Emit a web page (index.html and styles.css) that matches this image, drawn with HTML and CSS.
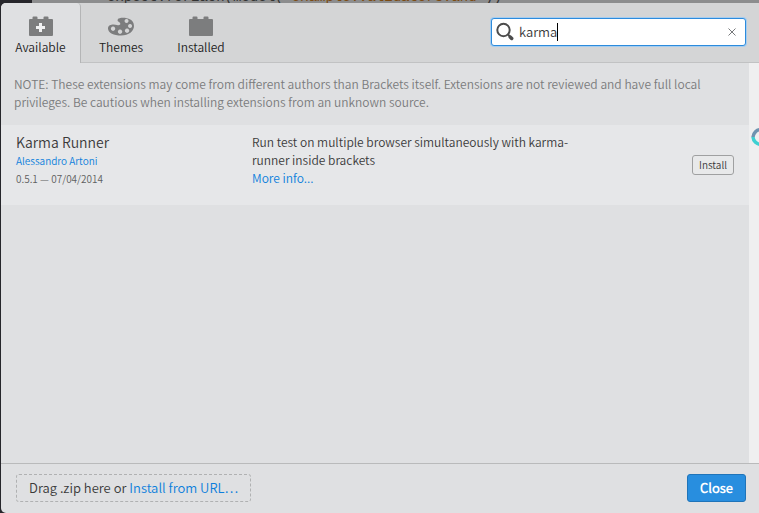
FILE: index.html
```html
<!DOCTYPE html>
<html lang="en">
<head>
<meta charset="utf-8">
<title>Extension Manager</title>
<link rel="stylesheet" href="styles.css">
</head>
<body>
<div class="editor" aria-hidden="true"><span class="gutter"></span><code class="code">expect.forEach(model(<b>'example.validators.and'</b>))</code></div>
<main class="dialog">
  <header class="header">
    <nav class="tabs">
      <button class="tab active" type="button">
        <svg class="icon" width="28" height="24" viewBox="0 0 28 24"><path fill="#7c7d7e" d="M3 5h2.500V3.500q0-1 1-1h3q1 0 1 1V5h6V3.500q0-1 1-1h3q1 0 1 1V5h3.500q1 0 1 1v15q0 1-1 1H3q-1 0-1-1V6q0-1 1-1z"/><path stroke="#f0f1f2" stroke-width="3" d="M13.500 9v9M9 13.500h9"/></svg>
        <span>Available</span>
      </button>
      <button class="tab" type="button">
        <svg class="icon" width="28" height="24" viewBox="0 0 28 24"><path fill="#7c7d7e" fill-rule="evenodd" d="M11 5C12 3 27 2 27 12C27 17 22 21.500 14 21.500C7 21.500 1 19 1 14.500C1 10 7 10 10 11C14 12 14 9 12 8C10 7 10.500 6 11 5zM19.500 5a2 2 0 1 0 .1 0zM23 10a2 2 0 1 0 .1 0zM20 14.500a2.200 2.200 0 1 0 .1 0zM13 15.500a2.200 2.200 0 1 0 .1 0zM6 12.500a2.200 2.200 0 1 0 .1 0z"/></svg>
        <span>Themes</span>
      </button>
      <button class="tab" type="button">
        <svg class="icon" width="28" height="24" viewBox="0 0 28 24"><path fill="#7c7d7e" d="M3 5h2.500V3.500q0-1 1-1h3q1 0 1 1V5h6V3.500q0-1 1-1h3q1 0 1 1V5h3.500q1 0 1 1v15q0 1-1 1H3q-1 0-1-1V6q0-1 1-1z"/></svg>
        <span>Installed</span>
      </button>
    </nav>
    <div class="search">
      <svg width="20" height="20" viewBox="0 0 20 20" fill="none" stroke="#4c4c4c"><circle cx="7.500" cy="8" r="6.200" stroke-width="2"/><path stroke-width="2" d="M12 12.500l2 2"/><path stroke-width="3.500" stroke-linecap="round" d="M14.200 15l1.500 1.500"/></svg>
      <input type="text" value="karma" aria-label="Search">
      <span class="caret"></span>
      <button class="clear" type="button" aria-label="Clear search"><svg width="8" height="8" viewBox="0 0 8 8" stroke="#77797b"><path d="M.5.5l7 7M7.500.5l-7 7"/></svg></button>
    </div>
  </header>
  <section class="list">
    <p class="note">NOTE: These extensions may come from different authors than Brackets itself. Extensions are not reviewed and have full local privileges. Be cautious when installing extensions from an unknown source.</p>
    <article class="item">
      <div class="info">
        <h2>Karma Runner</h2>
        <a class="author" href="#">Alessandro Artoni</a>
        <span class="version">0.5.1 — 07/04/2014</span>
      </div>
      <div class="desc">Run test on multiple browser simultaneously with karma-runner inside brackets<br><a href="#">More info...</a></div>
      <button class="install" type="button">Install</button>
    </article>
  </section>
  <footer class="footer">
    <div class="drop">Drag .zip here or <a href="#">Install from URL…</a></div>
    <button class="close" type="button">Close</button>
  </footer>
  <svg class="spinner" width="8" height="20" viewBox="0 0 8 20" fill="none" stroke-width="3.500"><path stroke="#6f93b0" d="M2 10A8 8 0 0 1 10 2.500"/><path stroke="#3fd0d2" d="M2 10A8 8 0 0 0 10 17.500"/></svg>
</main>
</body>
</html>
```
FILE: styles.css
```css
* { box-sizing: border-box; }
body {
  margin: 0;
  height: 100vh;
  display: flex;
  flex-direction: column;
  padding: 3px 0 0 1px;
  overflow: hidden;
  position: relative;
  background: #26262b;
  color: #3a3a3a;
  font: 350 13px/18px "Noto Sans CJK SC DemiLight", "Noto Sans CJK SC", "Open Sans", sans-serif;
}
button, input { font: inherit; color: inherit; }
a { color: #0d7fdc; text-decoration: none; }
.editor {
  position: absolute;
  inset: 0 0 auto 0;
  height: 12px;
  display: flex;
  overflow: hidden;
  background: #8c8d8e;
}
.gutter { width: 32px; background: #26262b; }
.code {
  margin: -12px 0 0 75px;
  font: 14px/18px "Liberation Mono", monospace;
  color: #333;
}
.code b { font-weight: 400; color: #7c4b12; }
.dialog {
  position: relative;
  flex: 1;
  min-height: 0;
  display: flex;
  flex-direction: column;
  overflow: hidden;
  background: #dfe0e2;
  border-radius: 5px 0 0 5px;
}
.header {
  display: flex;
  justify-content: space-between;
  height: 60px;
  background: #d4d5d6;
  border-bottom: 1px solid #c1c2c3;
}
.tabs { display: flex; }
.tab {
  width: 80px;
  height: 60px;
  padding: 11px 0 0;
  border: 0;
  background: none;
  color: #222;
  font-size: 12px;
  line-height: 18px;
  display: flex;
  flex-direction: column;
  align-items: center;
}
.tab.active {
  background: #dfe0e2;
  border-right: 1px solid #b4b5b6;
  border-radius: 5px 4px 0 0;
}
.icon { display: block; flex: none; }
.search {
  position: relative;
  display: flex;
  align-items: center;
  width: 255px;
  height: 28px;
  margin: 15px 13px 0 0;
  padding: 0 8px 0 4px;
  background: #fff;
  border: 1px solid #2d8bdc;
  border-radius: 3px;
  box-shadow: 0 0 0 1px #a5cdf0;
}
.search input {
  flex: 1;
  min-width: 0;
  padding: 0 0 0 3px;
  border: 0;
  outline: 0;
  background: none;
}
.caret {
  position: absolute;
  left: 65px;
  top: 4px;
  width: 1px;
  height: 18px;
  background: #000;
}
.clear { display: flex; padding: 1px; border: 0; background: none; }
.list {
  flex: 1;
  min-height: 0;
  border-right: 10px solid #efeff0;
}
.note {
  margin: 0;
  padding: 12px 13px 14px;
  color: #7a7b7c;
  font-size: 12px;
}
.item {
  display: flex;
  height: 80px;
  padding: 8px 15px;
  background: #e6e7e9;
}
.info { width: 236px; display: flex; flex-direction: column; }
.info h2 { margin: 0; font-size: 14px; line-height: 19px; font-weight: inherit; }
.author, .version { font-size: 10px; }
.version { color: #5e5f60; }
.desc { width: 320px; font-size: 12px; }
.install {
  align-self: center;
  width: 42px;
  height: 20px;
  margin-left: auto;
  padding: 0;
  border: 1px solid #9fa0a1;
  border-radius: 3px;
  background: #e8e9ea;
  font-size: 10px;
  line-height: 18px;
}
.footer {
  display: flex;
  align-items: flex-start;
  justify-content: space-between;
  height: 50px;
  padding: 10px 13px 0 15px;
  border-top: 1px solid #b9babb;
}
.drop {
  padding: 4px 12px;
  border: 1px dashed #b0b1b2;
  border-radius: 3px;
}
.close {
  width: 59px;
  height: 28px;
  padding: 0;
  border: 1px solid #1f74b9;
  border-radius: 3px;
  background: #288edf;
  color: #fff;
  font-weight: 700;
}
.spinner { position: absolute; right: 0; top: 124px; }
```
